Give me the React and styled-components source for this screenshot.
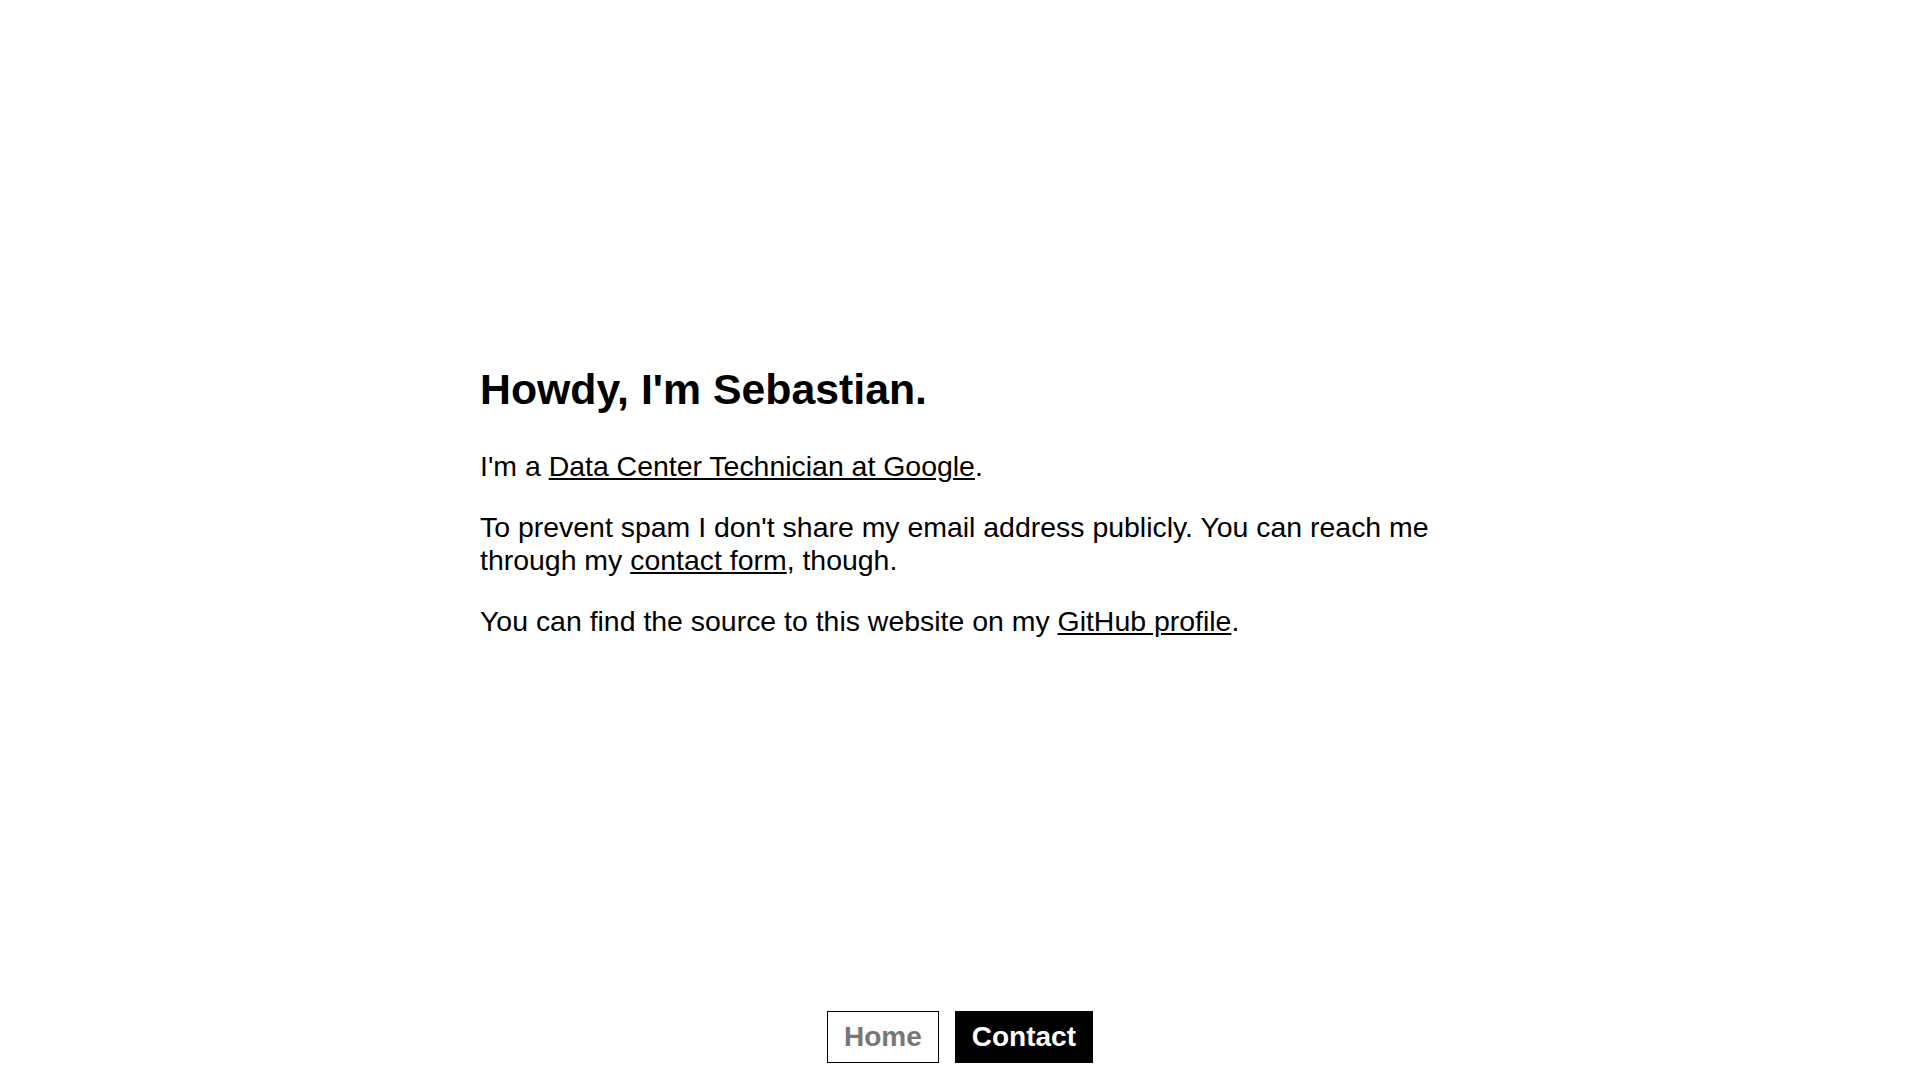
import styled, { createGlobalStyle } from "styled-components"

const GlobalStyle = createGlobalStyle`
    html, body {
        margin: 0;
        padding: 0;
        background: #fff;
    }
    body {
        font-family: "Liberation Sans", Arial, sans-serif;
        font-size: 28.45px;
        color: #000;
    }
`

export default function App() {
    return (
        <>
            <GlobalStyle />
            <Page>
                <Main>
                    <Content>
                        <Title>Howdy, I'm Sebastian.</Title>
                        <Text>
                            I'm a <Link href="#">Data Center Technician at Google</Link>.
                        </Text>
                        <Text>
                            To prevent spam I don't share my email address publicly. You can reach me
                            through my <Link href="#">contact form</Link>, though.
                        </Text>
                        <Text>
                            You can find the source to this website on my <Link href="#">GitHub profile</Link>.
                        </Text>
                    </Content>
                </Main>
                <Footer>
                    <NavButton href="#" $active={false}>Home</NavButton>
                    <NavButton href="#" $active={true}>Contact</NavButton>
                </Footer>
            </Page>
        </>
    )
}

const Page = styled.div`
    display: flex;
    flex-direction: column;
    min-height: 100vh;
`
const Main = styled.main`
    flex: 1;
    display: flex;
    align-items: center;
    justify-content: center;
`
const Content = styled.div`
    width: 100%;
    max-width: 960px;
    padding-top: 1px;
`
const Title = styled.h2`
    font-size: 42.8px;
    font-weight: 700;
    margin: 35px 0 36px;
`
const Text = styled.p`
    margin: 28px 0;
    line-height: 33px;
`
const Link = styled.a`
    color: #000;
    text-decoration: underline;
`
const Footer = styled.nav`
    display: flex;
    justify-content: center;
    gap: 16px;
    padding: 16px 0 17px;
`
const NavButton = styled.a`
    display: block;
    padding: 9px 16px;
    border: 1px solid #000;
    font-size: 28px;
    font-weight: 700;
    line-height: 32px;
    text-decoration: none;
    background: ${p => p.$active ? "#000" : "#fff"};
    color: ${p => p.$active ? "#fff" : "#777"};
`
